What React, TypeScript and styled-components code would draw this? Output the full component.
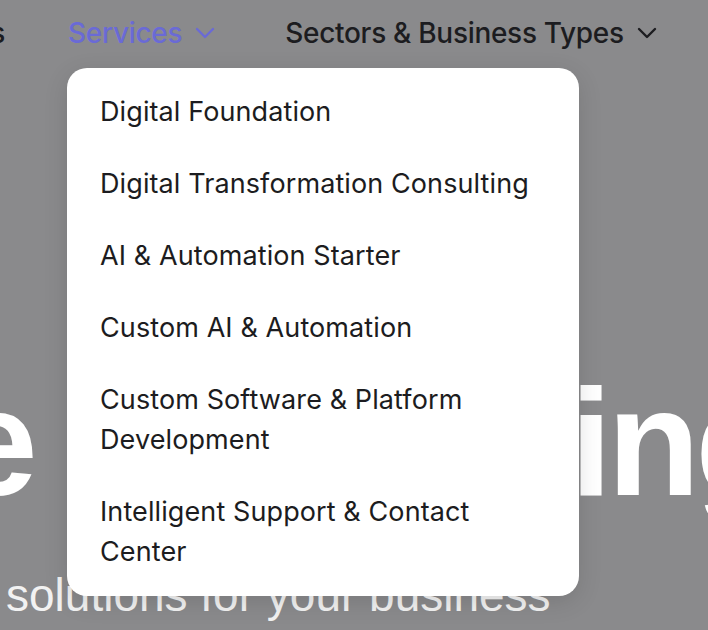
import React from 'react';
import styled, { createGlobalStyle } from 'styled-components';

const GlobalStyle = createGlobalStyle`
  html, body {
    margin: 0;
    padding: 0;
    background: #8a8a8c;
    overflow: hidden;
  }
  body {
    font-family: Inter, "Noto Sans", sans-serif;
  }
`;

const services = [
  'Digital Foundation',
  'Digital Transformation Consulting',
  'AI & Automation Starter',
  'Custom AI & Automation',
  'Custom Software & Platform Development',
  'Intelligent Support & Contact Center',
];

const Chevron = ({ color }: { color: string }) => (
  <svg width='20' height='12' viewBox='0 0 20 12' fill='none'>
    <polyline
      points='2,2 10,10 18,2'
      stroke={color}
      strokeWidth='2.4'
      strokeLinecap='round'
      strokeLinejoin='round'
    />
  </svg>
);

const App = () => {
  return (
    <>
      <GlobalStyle />
      <Page>
        <Nav>
          <NavLead>
            <NavItem>Solutions</NavItem>
          </NavLead>
          <NavWrap>
            <NavItem active>
              Services
              <Chevron color='#6a6ad6' />
            </NavItem>
            <Dropdown>
              {services.map((s) => (
                <MenuItem key={s}>{s}</MenuItem>
              ))}
            </Dropdown>
          </NavWrap>
          <NavItem>
            Sectors &amp; Business Types
            <Chevron color='#1c1c20' />
          </NavItem>
        </Nav>
        <Hero>
          <HeroTitle>Future Marketing</HeroTitle>
          <HeroSub>solutions for your business</HeroSub>
        </Hero>
      </Page>
    </>
  );
};

export default App;

const Page = styled.div`
  width: 708px;
  height: 630px;
  overflow: hidden;
  position: relative;
`;

const Nav = styled.nav`
  display: flex;
  align-items: center;
  gap: 70px;
  height: 66px;
  white-space: nowrap;
`;

const NavLead = styled.div`
  display: flex;
  justify-content: flex-end;
  width: 5px;
  margin-right: -7px;
`;

const NavWrap = styled.div`
  position: relative;
`;

const NavItem = styled.div<{ active?: boolean }>`
  display: flex;
  align-items: center;
  gap: 13px;
  font-size: 28px;
  line-height: 34px;
  font-weight: 500;
  letter-spacing: -0.3px;
  color: ${(p) => (p.active ? '#6a6ad6' : '#1c1c20')};
  cursor: pointer;
`;

const Dropdown = styled.div`
  position: absolute;
  top: calc(100% + 18px);
  left: -1px;
  width: 512px;
  padding: 8px 0;
  box-sizing: border-box;
  background: #ffffff;
  border-radius: 20px;
  box-shadow: 0 6px 24px rgba(0, 0, 0, 0.12);
  z-index: 5;
`;

const MenuItem = styled.div`
  padding: 16px 33px;
  font-size: 27px;
  line-height: 40px;
  letter-spacing: 0.1px;
  color: #1c1c20;
  white-space: normal;
  cursor: pointer;
`;

const Hero = styled.section`
  display: flex;
  flex-direction: column;
  padding-top: 300px;
`;

const HeroTitle = styled.h1`
  margin: 0 0 0 -410px;
  font-family: "Liberation Sans", Arial, sans-serif;
  font-weight: 700;
  font-size: 152px;
  line-height: 152px;
  letter-spacing: -5px;
  word-spacing: 40px;
  color: #ffffff;
  white-space: nowrap;
`;

const HeroSub = styled.p`
  margin: 47px 0 0 6px;
  font-family: "Liberation Sans", Arial, sans-serif;
  font-size: 46px;
  line-height: 60px;
  color: #f2f2f2;
  white-space: nowrap;
`;
